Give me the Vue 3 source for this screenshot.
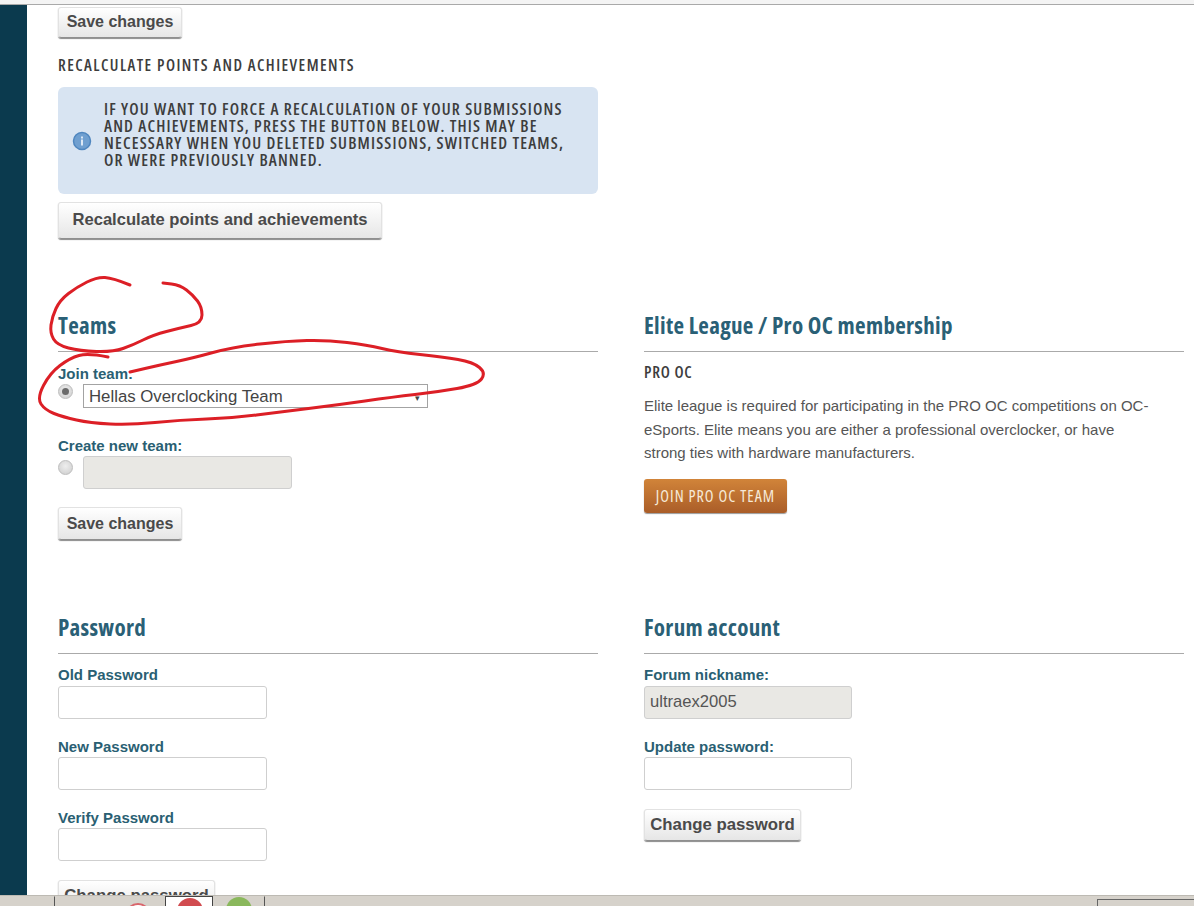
<script setup>
const lines = [
  [[130,285],[113,278],[97,277],[77,287],[60,300],[52,317],[50,333],[57,345],[80,351],[113,352],[133,345],[153,335],[180,328],[202,323],[202,307],[193,295],[180,285],[163,283]],
  [[108,357],[88,353],[70,358],[50,373],[37,398],[45,410],[63,417],[90,423],[130,425],[180,420],[233,418],[280,412],[337,405],[393,397],[437,392],[477,385],[486,373],[473,362],[443,357],[397,352],[367,345],[327,340],[287,341],[233,347],[193,358],[160,365],[130,372]]
]
function smooth(p) {
  let d = `M${p[0][0]} ${p[0][1]}`
  for (let i = 1; i < p.length - 1; i++) {
    const mx = (p[i][0] + p[i + 1][0]) / 2
    const my = (p[i][1] + p[i + 1][1]) / 2
    d += ` Q${p[i][0]} ${p[i][1]} ${mx} ${my}`
  }
  const last = p[p.length - 1]
  return d + ` L${last[0]} ${last[1]}`
}
const scribbles = lines.map(smooth)
</script>

<template>
  <div class="screen">
    <div class="topline"></div>
    <div class="middle">
      <div class="rail"></div>
      <main class="content">
        <button class="btn btn-first">Save changes</button>
        <h4 class="caps recalc-title">RECALCULATE POINTS AND ACHIEVEMENTS</h4>
        <div class="alert">
          <svg class="info" width="20" height="20" viewBox="0 0 20 20">
            <circle cx="10" cy="10" r="8.5" fill="#6f9fd0" stroke="#4f86bf" stroke-width="1.5" />
            <rect x="9" y="5.5" width="2" height="2" fill="#dce8f5" />
            <rect x="9" y="8.5" width="2" height="6" fill="#dce8f5" />
          </svg>
          <p>IF YOU WANT TO FORCE A RECALCULATION OF YOUR SUBMISSIONS<br />AND ACHIEVEMENTS, PRESS THE BUTTON BELOW. THIS MAY BE<br />NECESSARY WHEN YOU DELETED SUBMISSIONS, SWITCHED TEAMS,<br />OR WERE PREVIOUSLY BANNED.</p>
        </div>
        <button class="btn btn-big">Recalculate points and achievements</button>

        <div class="row row-teams">
          <section>
            <h2 class="title">Teams</h2>
            <label class="lab lab-join">Join team:</label>
            <div class="choice">
              <span class="radio on"></span>
              <div class="select">Hellas Overclocking Team<span class="arrow">▾</span></div>
            </div>
            <label class="lab lab-create">Create new team:</label>
            <div class="choice">
              <span class="radio off"></span>
              <div class="input disabled"></div>
            </div>
            <button class="btn btn-save">Save changes</button>
          </section>
          <section>
            <h2 class="title">Elite League / Pro OC membership</h2>
            <h4 class="caps pro">PRO OC</h4>
            <p class="para">Elite league is required for participating in the PRO OC competitions on OC-<br />eSports. Elite means you are either a professional overclocker, or have<br />strong ties with hardware manufacturers.</p>
            <button class="orange">JOIN PRO OC TEAM</button>
          </section>
        </div>

        <div class="row row-pass">
          <section>
            <h2 class="title">Password</h2>
            <label class="lab first">Old Password</label>
            <div class="input"></div>
            <label class="lab">New Password</label>
            <div class="input"></div>
            <label class="lab">Verify Password</label>
            <div class="input"></div>
            <button class="btn btn-change">Change password</button>
          </section>
          <section class="forum">
            <h2 class="title">Forum account</h2>
            <label class="lab first">Forum nickname:</label>
            <div class="input disabled filled">ultraex2005</div>
            <label class="lab">Update password:</label>
            <div class="input"></div>
            <button class="btn btn-change-r">Change password</button>
          </section>
        </div>
      </main>
    </div>
    <footer class="taskbar">
      <span class="cell c1"></span>
      <span class="cell c2"><i class="dot hollow"></i></span>
      <span class="cell c3"><i class="dot red"></i></span>
      <span class="cell c4"><i class="dot green"></i></span>
      <span class="cell c5"></span>
    </footer>
    <svg class="ink" width="1194" height="906" viewBox="0 0 1194 906">
      <path v-for="(d, i) in scribbles" :key="i" :d="d" fill="none" stroke="#dc1f26" stroke-width="3" stroke-linecap="round" stroke-linejoin="round" />
    </svg>
  </div>
</template>

<style>
html, body { margin: 0; background: #fff; overflow: hidden; }
</style>

<style scoped>
.screen { position: relative; width: 1194px; height: 906px; display: flex; flex-direction: column; overflow: hidden; background: #fff; font-family: "Liberation Sans", Arial, sans-serif; color: #444; }
.topline { height: 4px; flex: none; background: #f4f4f4; border-bottom: 1px solid #a9a9a9; }
.middle { flex: 1; min-height: 0; display: flex; overflow: hidden; }
.rail { width: 27px; flex: none; background: #0b3a4e; }
.content { flex: 1; padding: 2px 10px 0 31px; display: flex; flex-direction: column; align-items: flex-start; min-width: 0; }
.content > * { flex: none; }
.btn { display: block; box-sizing: border-box; padding: 0; margin: 0; white-space: nowrap; font: bold 16px/1 "Liberation Sans", Arial, sans-serif; color: #4a4a4a; border: 1px solid #e2e2e2; border-bottom-color: #8f8f8f; border-radius: 3px; background: linear-gradient(#fff, #e6e6e6); box-shadow: 0 1px 1px #8a8a8a; }
.btn-first { width: 124px; height: 31px; padding-bottom: 2px; }
.caps { margin: 0; font-family: "Open Sans", sans-serif; font-weight: 600; font-stretch: 75%; font-size: 16px; line-height: 18px; color: #3d3d3d; letter-spacing: 1.45px; }
.recalc-title { margin-top: 18px; }
.alert { box-sizing: border-box; width: 540px; height: 107px; margin-top: 13px; background: #d8e4f2; border-radius: 6px; display: flex; align-items: center; padding: 0 0 0 14px; }
.alert p { margin: 0 0 14px 12px; font-family: "Open Sans", sans-serif; font-weight: 600; font-stretch: 75%; font-size: 16.5px; line-height: 17px; letter-spacing: 1.16px; color: #3d3d3d; white-space: nowrap; }
.info { flex: none; }
.btn-big { width: 324px; height: 37px; margin-top: 8px; font-size: 16.6px; }
.row { display: grid; grid-template-columns: 540px 540px; column-gap: 46px; }
.row-teams { margin-top: 72px; height: 302px; }
.row-pass { height: 300px; }
.title { box-sizing: border-box; height: 41px; margin: 0; border-bottom: 1px solid #aaa; font-family: "Open Sans", sans-serif; font-weight: 700; font-stretch: 75%; font-size: 23px; line-height: 28px; color: #2a6076; letter-spacing: 0.3px; }
.lab { display: block; font: bold 15px/17px "Liberation Sans", Arial, sans-serif; color: #2a5f73; }
.lab-join { margin-top: 13px; margin-bottom: 2px; }
.choice { display: flex; align-items: flex-start; gap: 10px; }
.radio { flex: none; box-sizing: border-box; width: 15px; height: 15px; border-radius: 50%; border: 1px solid #bdbdbd; background: radial-gradient(circle at 50% 40%, #eee, #ccc); position: relative; }
.radio.off { margin-top: 4px; }
.radio.on::after { content: ""; position: absolute; left: 3px; top: 3px; width: 7px; height: 7px; border-radius: 50%; background: #6b6b6b; }
.select { box-sizing: border-box; position: relative; width: 345px; height: 24px; padding-left: 5px; border: 1px solid #a3a3a3; font: 16.8px/23px "Liberation Sans", Arial, sans-serif; color: #444; background: #fff; }
.arrow { position: absolute; right: 7px; top: 2px; font-size: 9px; color: #444; }
.lab-create { margin-top: 29px; margin-bottom: 2px; }
.input { box-sizing: border-box; width: 209px; height: 33px; border: 1px solid #cfcfcf; border-radius: 3px; background: #fff; flex: none; }
.forum .input { width: 208px; }
.disabled { background: #e9e8e4; }
.filled { padding-left: 5px; font: 16.6px/30px "Liberation Sans", Arial, sans-serif; color: #555; }
.btn-save { width: 124px; height: 33px; margin-top: 18px; }
.lab.first { margin-top: 12px; margin-bottom: 3px; }
.input + .lab { margin-top: 19px; margin-bottom: 2px; }
.btn-change { width: 157px; height: 33px; margin-top: 19px; font-size: 16.8px; }
.btn-change-r { width: 157px; height: 32px; margin-top: 19px; font-size: 16.8px; }
.pro { margin-top: 11px; letter-spacing: 0.8px; }
.para { margin: 13px 0 0; font: 15px/23.5px "Liberation Sans", Arial, sans-serif; color: #555; }
.orange { display: block; box-sizing: border-box; width: 143px; height: 34px; margin-top: 14px; padding: 0; border: 0; border-radius: 3px; background: linear-gradient(#d18439, #aa5d28); color: #f6ead9; font-family: "Open Sans", sans-serif; font-stretch: 75%; font-size: 16px; line-height: 34px; letter-spacing: 1px; box-shadow: 0 1px 1px #999; }
.taskbar { flex: none; height: 11px; box-sizing: border-box; border-top: 1px solid #bdbab3; background: #d6d2cb; display: flex; overflow: hidden; }
.cell { display: block; height: 100%; box-sizing: border-box; position: relative; overflow: hidden; border-top: 1px solid #d6d2cb; }
.c1 { width: 55px; border-right: 1px solid #555; }
.c2 { width: 110px; background: #d6d2cb; }
.c3 { width: 48px; background: #fff; border: 1px solid #444; border-bottom: 0; }
.c4 { width: 50px; margin-left: 2px; border-right: 1px solid #555; }
.c5 { width: 97px; margin-left: auto; border: 1px solid #666; border-right: 0; border-bottom: 0; margin-top: 3px; }
.dot { position: absolute; width: 26px; height: 26px; border-radius: 50%; box-sizing: border-box; }
.hollow { left: 70px; top: 6px; border: 2px solid #d9666c; background: #fff; }
.red { left: 11px; top: 1px; background: #d14b4f; }
.green { left: 11px; top: 0; background: #8ab85c; }
.ink { position: absolute; left: 0; top: 0; pointer-events: none; }
</style>
